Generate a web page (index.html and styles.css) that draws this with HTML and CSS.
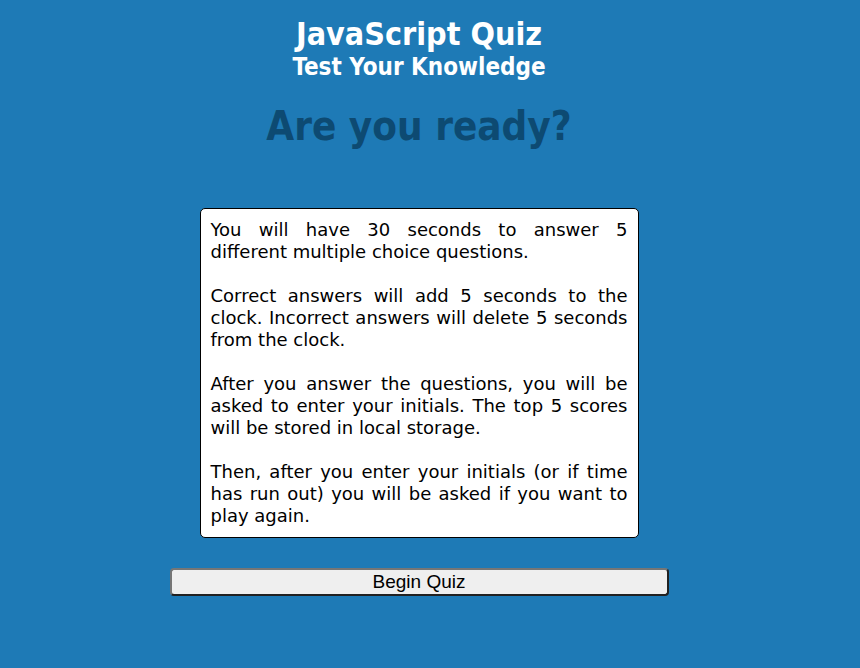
FILE: index.html
```html
<!DOCTYPE html>
<html>
<head>
<meta charset="utf-8">
<link rel="stylesheet" href="styles.css">
</head>
<body>
<header class="header">
  <h1 class="title">JavaScript Quiz</h1>
  <h2 class="subtitle">Test Your Knowledge</h2>
</header>
<main class="main">
  <h2 class="ready">Are you ready?</h2>
  <div class="rules">
    <p>You will have 30 seconds to answer 5 different multiple choice questions.</p>
    <p>Correct answers will add 5 seconds to the clock. Incorrect answers will delete 5 seconds from the clock.</p>
    <p>After you answer the questions, you will be asked to enter your initials. The top 5 scores will be stored in local storage.</p>
    <p>Then, after you enter your initials (or if time has run out) you will be asked if you want to play again.</p>
  </div>
  <button class="begin">Begin Quiz</button>
</main>
</body>
</html>
```
FILE: styles.css
```css
html, body {
  margin: 0;
  padding: 0;
}
body {
  background: #1e7ab6;
  font-family: "DejaVu Sans", Verdana, sans-serif;
  height: 668px;
  padding-right: 22px;
}
.header {
  display: flex;
  flex-direction: column;
  align-items: center;
  padding-top: 15px;
}
.title {
  margin: 0;
  color: #fff;
  font-family: "DejaVu Sans Condensed", "DejaVu Sans", sans-serif;
  font-size: 32px;
  line-height: 38px;
}
.subtitle {
  margin: 0;
  color: #fff;
  font-family: "DejaVu Sans Condensed", "DejaVu Sans", sans-serif;
  font-size: 24px;
  line-height: 28px;
}
.main {
  display: flex;
  flex-direction: column;
  align-items: center;
}
.ready {
  margin: 21px 0 0;
  color: #0d4a72;
  font-family: "DejaVu Sans Condensed", "DejaVu Sans", sans-serif;
  font-size: 40px;
  line-height: 48px;
}
.rules {
  margin-top: 58px;
  width: 417px;
  background: #fff;
  border: 1px solid #000;
  border-radius: 5px;
  padding: 10px 10px;
  color: #000;
  font-size: 18px;
  line-height: 22px;
  text-align: justify;
}
.rules p {
  margin: 0 0 22px;
}
.rules p:last-child {
  margin-bottom: 0;
}
.begin {
  margin-top: 30px;
  width: 499px;
  height: 28px;
  font-family: "Liberation Sans", Arial, sans-serif;
  font-size: 19px;
  background: #efefef;
  border: 2px outset #767676;
  border-radius: 4px;
  color: #000;
}
```
